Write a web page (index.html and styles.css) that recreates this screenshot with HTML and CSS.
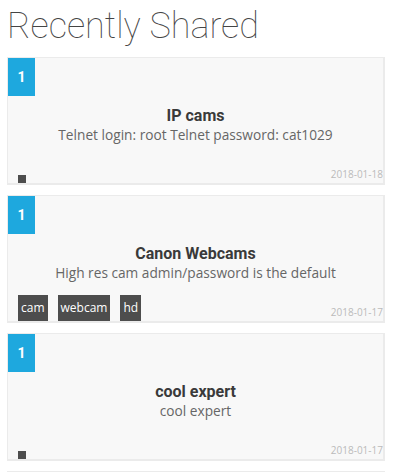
FILE: index.html
```html
<!DOCTYPE html>
<html lang="en">
   <head>
      <meta charset="UTF-8"/>
      <title>Recently Shared</title>
      <link rel="stylesheet" href="styles.css">
   </head>

   <body>
      <h1 class="pageTitle">Recently Shared</h1>

      <div class="shareList">
         <div class="shareCard">
            <div class="shareCount">1</div>
            <div class="shareTitle">IP cams</div>
            <div class="shareDesc">Telnet login: root Telnet password: cat1029</div>
            <div class="shareFooter">
               <div class="tagList">
                  <span class="tag"></span>
               </div>
               <span class="shareDate">2018-01-18</span>
            </div>
         </div>

         <div class="shareCard">
            <div class="shareCount">1</div>
            <div class="shareTitle">Canon Webcams</div>
            <div class="shareDesc">High res cam admin/password is the default</div>
            <div class="shareFooter">
               <div class="tagList">
                  <span class="tag">cam</span>
                  <span class="tag">webcam</span>
                  <span class="tag">hd</span>
               </div>
               <span class="shareDate">2018-01-17</span>
            </div>
         </div>

         <div class="shareCard">
            <div class="shareCount">1</div>
            <div class="shareTitle">cool expert</div>
            <div class="shareDesc">cool expert</div>
            <div class="shareFooter">
               <div class="tagList">
                  <span class="tag"></span>
               </div>
               <span class="shareDate">2018-01-17</span>
            </div>
         </div>

         <!-- next card, only its top edge is in view -->
         <div class="shareCard">
            <div class="shareCount"></div>
         </div>
      </div>
   </body>
</html>
```

FILE: styles.css
```css
html, body { margin: 0; padding: 0; background: #ffffff; }

body {
   padding: 0 15px 0 7px;
   font-family: "Open Sans", "Liberation Sans", sans-serif;
   overflow: hidden;
}

.pageTitle {
   margin: 5px 0 10px 0;
   font-family: Roboto, "Liberation Sans", sans-serif;
   font-weight: 100;
   font-size: 36px;
   line-height: 42px;
   color: #444444;
}

.shareCard {
   display: flex;
   flex-direction: column;
   height: 125px;
   margin-bottom: 10px;
   background: #f8f8f8;
   border: solid #ebebeb;
   border-width: 1px 2px 2px 1px;
}

.shareCount {
   width: 27px;
   height: 38px;
   background: #1ea8de;
   color: #ffffff;
   font-family: Roboto, "Liberation Sans", sans-serif;
   font-weight: bold;
   font-size: 14px;
   line-height: 38px;
   text-align: center;
}

.shareTitle {
   margin-top: 11px;
   font-family: Roboto, "Liberation Sans", sans-serif;
   font-weight: bold;
   font-size: 16px;
   line-height: 18px;
   color: #3a3a3a;
   text-align: center;
}

.shareDesc {
   font-size: 13.7px;
   line-height: 20px;
   color: #666666;
   text-align: center;
}

.shareFooter {
   display: flex;
   justify-content: space-between;
   align-items: flex-end;
   margin-top: auto;
   padding: 0 0 0 10px;
}

.tagList {
   display: flex;
   align-items: flex-end;
   gap: 10px;
}

.tag {
   min-width: 2px;
   padding: 4px 3px;
   background: #4d4d4d;
   color: #ffffff;
   font-size: 12px;
   line-height: 18px;
}

.tag:empty {
   padding: 4px;
   min-width: 0;
}

.shareDate {
   padding-bottom: 2px;
   font-size: 10px;
   line-height: 14px;
   color: #bbbbbb;
}
```
